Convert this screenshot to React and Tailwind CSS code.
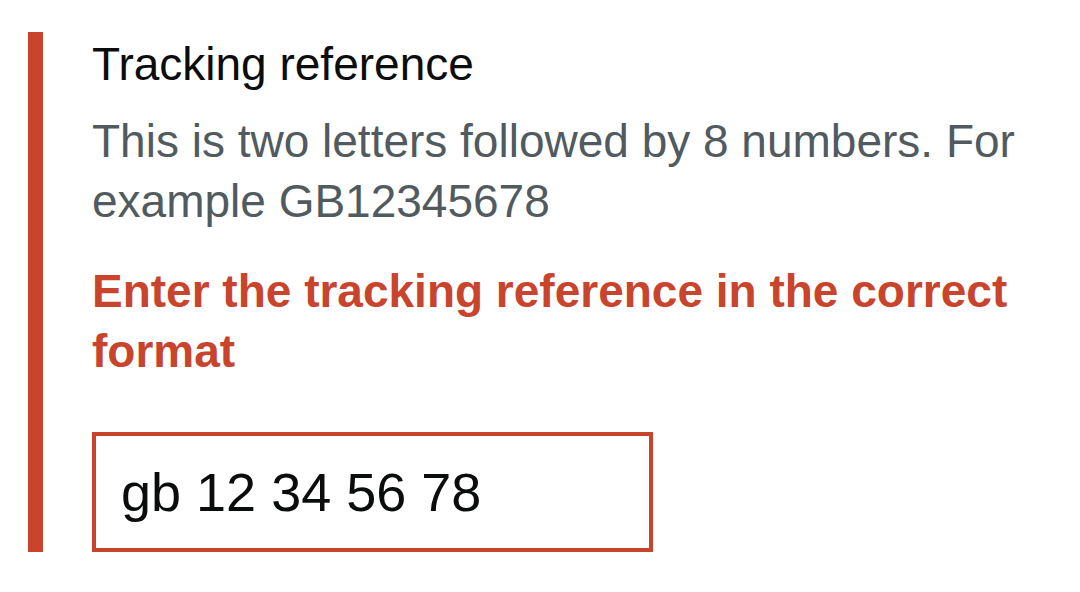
import React from 'react';

export default function App() {
  return (
    <div className="w-[1080px] h-[592px] bg-white font-['Liberation_Sans',Arial,sans-serif]">
      <div className="flex pt-8 pl-7">
        {/* error bar */}
        <div className="w-[15px] h-[520px] bg-[#c9442c]" />
        <div className="w-[1000px] pl-[49px] pt-[2px] flex flex-col">
          <label className="text-[46px] leading-[60px] text-[#0b0c0c]">Tracking reference</label>
          <div className="mt-[17px] text-[46px] leading-[60px] text-[#505a5f]">
            This is two letters followed by 8 numbers. For example GB12345678
          </div>
          <p className="mt-[30px] text-[46px] leading-[60px] font-bold text-[#c9442c]">
            Enter the tracking reference in the correct format
          </p>
          <input
            readOnly
            value="gb 12 34 56 78"
            className="mt-[51px] w-[561px] h-[120px] border-4 border-[#c9442c] px-[25px] text-[54px] text-[#0b0c0c] outline-none font-['Liberation_Sans',Arial,sans-serif]"
          />
        </div>
      </div>
    </div>
  );
}
